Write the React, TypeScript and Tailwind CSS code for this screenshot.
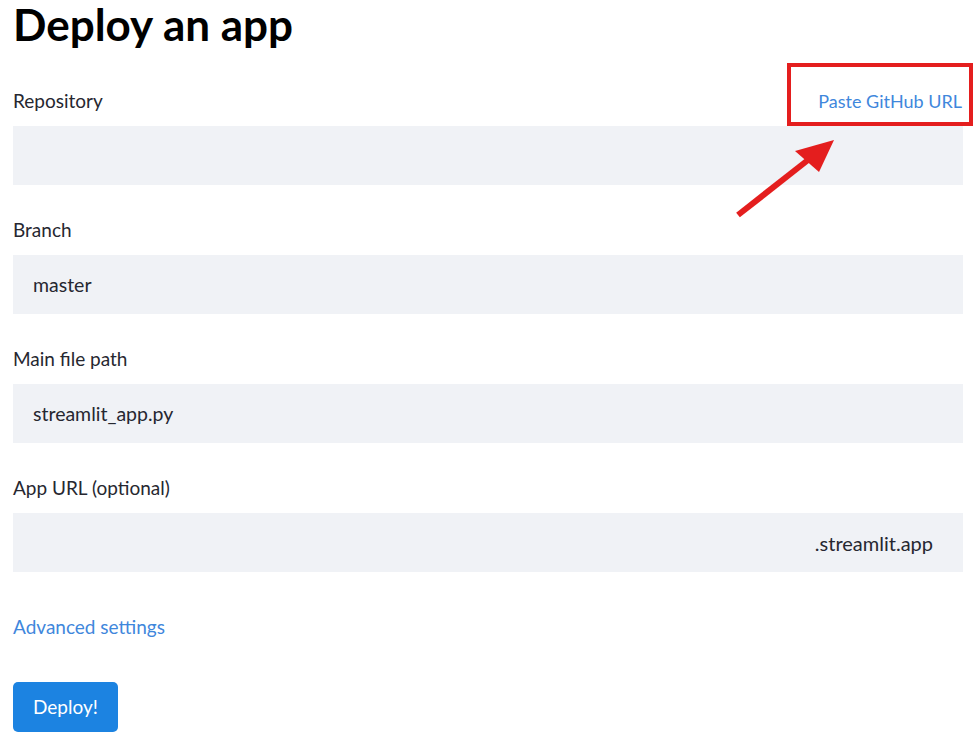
import React from "react";

const font = { fontFamily: '"Lato", "Open Sans", sans-serif' };

interface FieldProps {
  label: string;
  value?: string;
  suffix?: string;
  right?: React.ReactNode;
}

const Field: React.FC<FieldProps> = ({ label, value, suffix, right }) => (
  <div className="flex flex-col">
    <div className="flex items-center justify-between h-[24px] mb-[13px]">
      <span className="text-[19px] text-[#262730]">{label}</span>
      {right}
    </div>
    <div className="flex items-center justify-between h-[59px] bg-[#f0f2f6] px-[20px] pr-[30px] text-[19.5px] text-[#262730]">
      <span>{value}</span>
      {suffix && <span className="text-[20px]">{suffix}</span>}
    </div>
  </div>
);

export default function App() {
  return (
    <div className="relative w-[973px] h-[742px] bg-white overflow-hidden" style={font}>
      <div className="px-[13px] pr-[10px]">
        <h1 className="text-[44px] font-bold leading-[48px] text-black mt-0 mb-[41px]">
          Deploy an app
        </h1>
        <div className="flex flex-col gap-[33px]">
          <Field
            label="Repository"
            right={
              <span className="relative text-[18px] text-[#3f87dc] pr-[1px]">
                Paste GitHub URL
                <span className="absolute left-[-31px] right-[-10px] top-[-25px] bottom-[-11px] border-4 border-[#e41e1e]" />
              </span>
            }
          />
          <Field label="Branch" value="master" />
          <Field label="Main file path" value="streamlit_app.py" />
          <Field label="App URL (optional)" suffix=".streamlit.app" />
        </div>
        <div className="mt-[43px] text-[19px] leading-[23px] text-[#3f87dc]">Advanced settings</div>
        <button className="mt-[44px] h-[50px] px-[20px] rounded-[5px] bg-[#1c83e1] text-white text-[19px]">
          Deploy!
        </button>
      </div>
      <svg className="absolute left-0 top-0" width="973" height="742">
        <line x1="738" y1="215" x2="808" y2="160" stroke="#e41e1e" strokeWidth="6" />
        <polygon points="834,140 795,151 819,172" fill="#e41e1e" />
      </svg>
    </div>
  );
}
